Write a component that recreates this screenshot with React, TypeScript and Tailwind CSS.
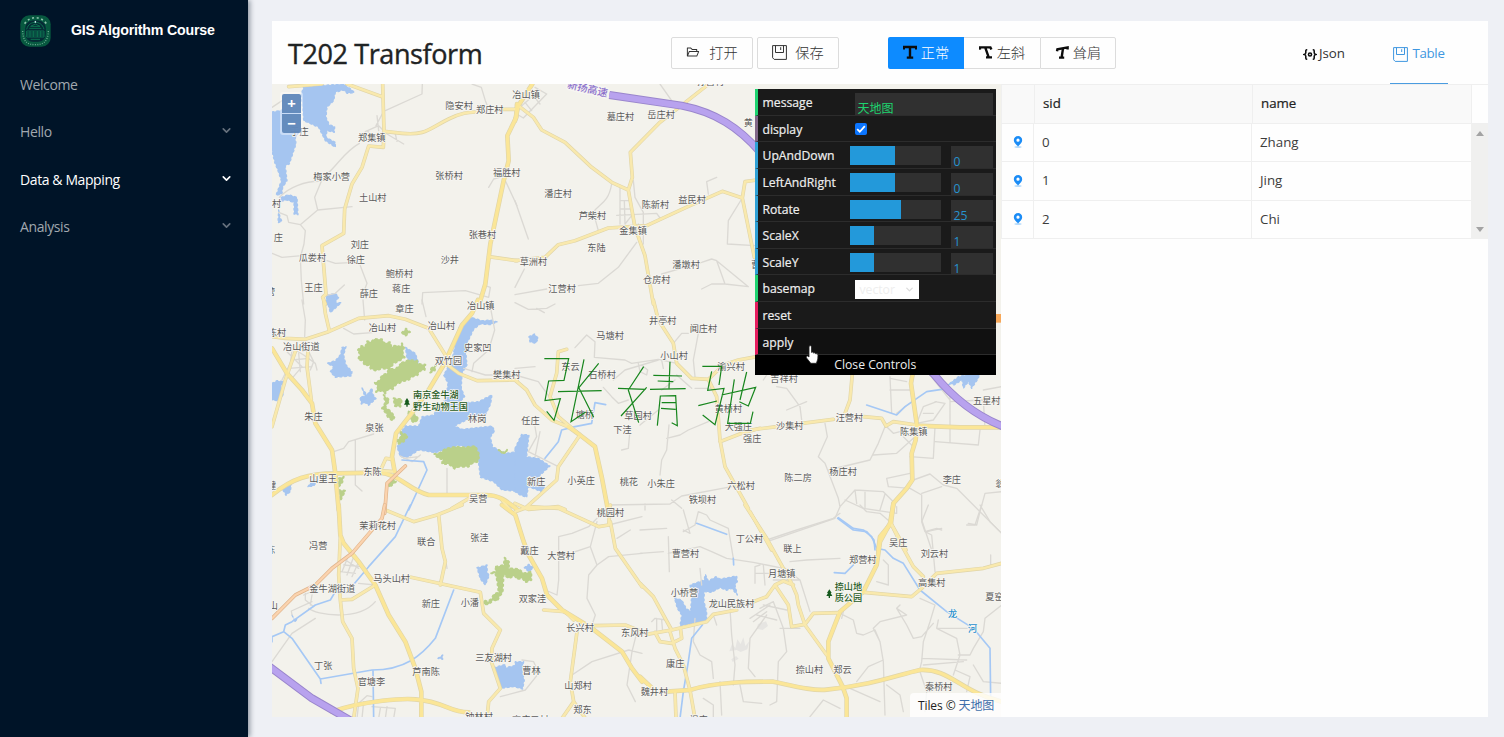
import React from "react";
import { AiOutlineFolderOpen } from "react-icons/ai";
import { FiChevronDown } from "react-icons/fi";

type Label = [number, number, string];

interface Sector {
  x: number;
  y: number;
  water?: string;
  green?: string;
  gray?: string;
  minor?: string;
  major?: string;
  orange?: string;
  river?: string;
  labels: Label[];
}

// Map geometry, in thirds of a pixel, split into sectors with their own origin.
const sectors: Sector[] = [
  {
    x: 0,
    y: 0,
    water:
      "M95 8L215 0L240 18L247 26L225 28L215 18L190 25L185 50L165 70L162 100L172 122L188 128L187 145L165 140L162 160L190 175L190 190L160 170L140 130L95 110L88 30ZM0 84L32 78L85 80L84 140L70 160L72 180L52 240L40 245L45 290L32 310L30 330L12 334L28 290L18 260L8 235L0 200ZM28 340L50 332L75 340L78 392L66 390L66 356L45 348L25 352ZM20 378L24 400L30 412L18 416ZM165 634L190 628L200 640L185 662L160 662Z",
    gray:
      "M340 80L450 30L451 0M600 0L628 10L640 50L645 62M0 70L45 40M312 125L335 82M315 95L320 140M280 143L320 125L345 150L395 180M285 140L330 175M370 150L375 172M262 178C215 205 200 240 165 270L148 292L128 340L137 378L240 368M148 292C100 290 50 310 22 340M137 378L85 422L50 415L45 395L20 385M85 422L100 440L96 480L85 520L88 590L95 660M0 508L30 520L90 515M165 530L190 538L250 535M265 545L285 598L275 625M217 603L190 628L160 635M450 660L452 626L580 620L650 640L655 610L640 605M650 310L665 285L700 275M700 290L735 365",
    minor:
      "M50 8L150 0M225 0L330 38M332 0L336 142L390 148C460 155 470 135 530 105C570 85 590 85 615 84M690 76L735 76M336 142L334 190L290 186L270 250L240 300L218 375L215 448L150 485L162 630L152 640L160 660M650 518L735 530",
    major: "M735 60L733 100L706 155L710 230L695 290L655 480L640 600L625 650",
    labels: [
      [520, 66, "隐安村"], [612, 76, "郑庄村"], [258, 160, "郑集镇"], [55, 143, "于庄"],
      [124, 278, "梅家小营"], [490, 276, "张桥村"], [663, 266, "福胜村"], [261, 340, "土山村"],
      [0, 360, "村"], [5, 462, "庄"], [590, 452, "张巷村"], [236, 483, "刘庄"], [224, 526, "徐庄"],
      [80, 521, "瓜娄村"], [506, 527, "沙井"], [341, 568, "鲍桥村"], [97, 611, "王庄"],
      [360, 615, "蒋庄"], [263, 629, "薛庄"], [-18, 622, "营"],
    ],
  },
  {
    x: 729,
    y: 0,
    gray:
      "M435 0L470 50M5 90L25 102L95 30L60 10M15 70L55 35L75 60M30 55L50 80M290 300C280 360 250 360 235 385L250 440M315 310L315 420M328 350L330 420M355 290L360 340L385 385L385 480M315 350L345 350M315 375L350 375M305 394L425 388L435 402M330 420L350 395M370 420L375 480M365 475L310 550L250 598L190 605M95 615L0 632M440 570L560 535L590 525L605 530L630 600L700 608L605 530M560 615L590 600L630 600M605 280L575 293L580 330M680 345L640 410L637 480L720 485M0 350L40 465M28 555L0 610",
    minor:
      "M10 65L55 100L80 138L150 175L230 250L290 295L340 318L360 430L390 515L415 660M340 318L352 280L346 205L435 115L575 5M0 530L90 520L130 482L180 470L280 432L395 425L525 365L622 322L682 342L690 293L725 288M682 342L718 520",
    major: "M52 0L10 65L0 110",
    labels: [
      [-8, 31, "冶山镇"], [545, -6, "孙营村"], [275, 97, "墓庄村"], [397, 92, "岳庄村"], [686, 116, "黄"],
      [88, 328, "潘庄村"], [191, 396, "芦柴村"], [380, 363, "陈新村"], [490, 348, "益民村"],
      [313, 439, "金集镇"], [217, 491, "东陆"], [14, 532, "草洲村"], [472, 541, "潘墩村"],
      [384, 588, "仓房村"], [100, 613, "江营村"], [708, 541, "曹"],
    ],
  },
  {
    x: 0,
    y: 648,
    water:
      "M560 85L570 70L598 52L630 62L655 60L676 66L655 74L625 72L605 88L590 120L580 140L585 195L570 220L568 265L578 290L560 310L620 305L660 284L656 312L640 345L600 352L548 378L570 388L660 378L668 392L655 412L662 440L700 460L735 455L735 574L690 570L665 545L625 532L615 450L560 436L490 458L440 450L408 472L385 470L375 440L390 425L385 400L400 378L440 378L450 350L485 345L500 315L520 300L528 250L515 225L540 180ZM222 140L215 165L222 195L240 215L238 228L190 232L175 215L185 200L165 190L190 182L205 165L210 142ZM0 250L15 242L36 245L25 262L35 282L20 302L0 300ZM270 264L285 285L300 264L302 282L312 296L290 316L280 308L268 312L264 292L278 288ZM400 142L430 160L440 190L425 192L405 175ZM165 0L190 -10L190 8L208 8L175 38ZM30 565L58 552L55 575L42 586ZM108 560L120 540L138 540L125 558Z",
    green:
      "M258 150L268 138L280 140L285 124L298 126L306 117L330 118L338 130L355 126L358 142L372 136L384 140L390 130L396 142L392 160L398 172L380 184L365 190L352 208L330 205L312 212L296 206L292 195L278 196L272 182L258 178L264 164ZM390 188L410 180L435 182L440 192L460 194L458 210L445 212L436 226L420 230L410 240L392 244L370 255L362 268L348 268L340 280L328 272L312 276L318 260L308 248L322 242L330 226L345 220L350 208L372 206ZM390 98L402 86L414 96L400 108ZM365 295L390 298L385 320L368 318ZM335 285L352 300L340 322L356 334L368 350L362 362L348 352L342 340L330 325L340 308ZM410 335L430 345L440 358L425 368L408 350ZM385 395L408 408L395 425L378 432L375 420L388 410ZM487 462L505 458L520 446L550 440L580 442L610 438L622 465L618 485L600 490L590 500L560 500L548 506L530 492L510 492L512 478L500 475ZM478 205L492 195L488 212L474 218ZM200 535L215 530L210 550L200 560ZM200 570L220 572L205 602ZM350 545L362 535L372 545L352 562ZM680 450L700 460L706 448L695 462Z",
    gray:
      "M450 0L462 50M273 0L278 60M90 0L100 60L98 110M215 85L245 102L300 98M655 20L668 90L650 150L605 190L600 215M735 225L640 225L575 205M60 150L55 190L30 240M45 155L90 200L60 235M70 150L95 165L130 190L135 210M60 180L110 175M50 205L120 200M80 160L85 215M110 155L125 185L115 210M185 455L215 445L230 425L305 402M250 420L250 555L270 573M525 505L525 580M385 468L420 485L445 465M395 475L440 470",
    minor:
      "M0 110L40 115L100 118L170 95L260 55L350 47L400 58L470 85L520 165M155 0L160 40L172 92M75 140L40 240L0 380M108 150L105 200L118 300M368 515L325 512L342 475L360 478M520 190L560 220L615 242L735 240M540 625L600 590M690 600L715 630",
    major:
      "M618 0L600 40L570 75L545 130L515 195L470 270L415 345L372 400L360 470L368 515M0 145L45 220L90 270L120 310L130 370L180 450L190 520L200 630M0 585C60 535 110 520 190 520L320 518C380 520 410 570 470 585L640 585C680 585 700 600 735 628",
    orange: "M400 498L345 550L338 640",
    river: "M390 480L455 485L465 510L410 630",
    labels: [
      [585, 17, "冶山镇"], [370, 25, "章庄"], [-40, 98, "小陈村"], [290, 84, "冶山村"], [467, 76, "冶山村"],
      [33, 140, "冶山街道"], [576, 144, "史家凹"], [488, 182, "双竹园"], [663, 225, "樊集村"],
      [97, 350, "朱庄"], [280, 384, "泉张"], [588, 356, "林岗"], [274, 514, "东陈"],
      [112, 536, "山里王"], [591, 595, "吴营"], [-15, 557, "健"],
    ],
  },
  {
    x: 729,
    y: 648,
    water:
      "M0 445L20 403L42 405L38 440L35 470L70 475L105 498L60 540L88 560L80 575L40 560L35 592L15 585L0 575ZM42 110L58 102L70 115L62 130L45 126Z",
    gray:
      "M0 8L40 28L95 25L120 12M65 25L88 38M180 143L215 105L240 125L238 172L330 180L350 190L430 178L485 190M475 130L500 100L520 100M550 100L535 180L540 230M0 205L60 200M0 225L70 245L110 300M370 190L375 215L395 225L398 210L380 195M295 240L330 210L430 180M265 262L290 290L310 310L340 300M440 180L445 205M480 240L440 270M485 225L530 265M60 380L65 410L40 455L130 500M75 395L60 470M285 210L260 240M345 390L340 445L320 450M375 375L430 330M455 415L495 405L520 390L580 365M462 375L455 450L440 480L435 525M540 265L590 265M280 615L465 612L500 588L650 560M470 600L500 625M390 612L390 630",
    minor:
      "M0 240L35 270L60 315L110 360L170 385M195 405L130 500L125 540L30 625M415 0L430 60L475 130L485 190L530 235L580 238L625 195L670 180L725 170M580 238L605 290L615 420L630 500L700 625M615 425L680 400L735 385M0 610L40 628L130 620L150 628M155 148L130 155L125 220L105 290L130 350L195 405",
    major: "M160 380L195 405L240 440L260 530L278 625",
    river: "M90 475L130 425L140 390L180 380L230 370L240 308L272 314",
    labels: [
      [402, 61, "井亭村"], [244, 108, "马塘村"], [524, 86, "闻庄村"], [436, 168, "小山村"],
      [139, 201, "东云"], [220, 225, "石桥村"], [607, 200, "渝兴村"], [599, 325, "黄桥村"],
      [19, 362, "任庄"], [182, 343, "塘桥"], [328, 348, "草园村"], [295, 390, "下洼"], [629, 379, "大强庄"],
      [684, 417, "强庄"], [36, 544, "新庄"], [157, 543, "小英庄"], [314, 544, "桃花"], [397, 552, "小朱庄"],
      [637, 558, "六松村"], [521, 598, "铁坝村"],
    ],
  },
  {
    x: 1434,
    y: 858,
    water: "M600 40L625 20L690 5L685 25L665 55L655 35L640 55L636 30L612 45Z",
    gray:
      "M40 30L50 15M80 50L110 55L150 110L155 150M110 120L170 95M225 160L232 200L205 260L225 280L265 385L270 410L255 445L60 512M405 170L385 220L360 270L235 300M370 255L440 250L490 205M560 95L520 110L500 160L550 150L585 100L555 95M600 80L600 215M520 130L550 130M555 170L550 265L480 260M555 215L685 225L690 180M600 95L700 90L705 175M420 20L425 130M420 60L480 60M420 25L470 35M440 130L480 100M410 170L430 190L450 185M460 200L490 230M410 325L480 310M410 325L415 350L480 355L515 375L515 450L545 540M530 485L575 475M490 330L540 312L580 345L620 355L690 425L680 465L655 460M690 425L705 370L755 365M690 425L755 490M515 370L575 350M270 410L315 360L400 365L430 395M285 390L340 415L440 430L440 410M315 360L320 400M345 365L345 415M405 372L390 420M700 60L755 50M540 15L600 90",
    minor:
      "M0 180L80 170L250 148M308 0L300 90L285 130M340 140L395 145L408 168L430 155L500 165M423 460L468 540M0 425L65 540",
    major:
      "M490 0L483 40L500 160L497 210L485 250L487 330L470 355L430 400L423 460L390 500L385 540M500 167L630 172L755 172",
    river: "M350 105L440 135L465 110L530 65L575 58L610 35M263 445L310 480L350 485L372 510L375 540",
    labels: [
      [61, 26, "吉祥村"], [669, 92, "五星村"], [78, 168, "沙集村"], [257, 144, "汪营村"], [450, 184, "陈集镇"],
      [238, 305, "杨庄村"], [103, 322, "陈二房"], [578, 330, "李庄"], [736, 340, "翁"],
    ],
  },
  {
    x: 0,
    y: 1263,
    water:
      "M665 488L700 478L700 488L728 482L730 470L755 470L750 500L757 525L752 552L725 545L685 550ZM615 188L645 180L646 205L652 210L640 240L625 222ZM757 188L770 178L785 188L770 200ZM498 460L512 450L512 463ZM60 330L68 345L75 340L70 352Z",
    green:
      "M672 185L695 180L698 158L712 172L710 190L740 192L755 205L778 200L778 225L760 232L752 220L735 222L728 212L710 220L695 208L692 262L684 272L675 288L665 284L650 298L632 298L636 286L648 290L660 280L665 268L680 262L675 225L670 205L655 205L670 200Z",
    gray:
      "M215 180L270 185M220 165L260 190M205 200L250 205M230 150L210 200M245 155L225 210M260 170L240 215M100 265L100 285L125 305M120 270L115 300M95 270L130 255M110 310C130 330 260 350 310 290M0 470L60 385L130 340M60 330L58 318L120 290M260 235L310 240M255 640L260 595L285 572L300 575M275 590L270 640M300 605L370 610L365 640M325 610L320 640M345 605L340 640M520 160L525 190M860 95L860 225L855 270L820 255M860 95L900 85L950 65L975 40M880 150L955 125L975 180L950 210L945 280L970 330L960 360M975 180L1010 155L1110 145M975 50L955 125M1035 100L1075 75M1010 60L1110 35M685 575L760 555L800 505L785 470L750 465M900 510L960 470L1070 435L1110 445M1095 380L1080 440L1065 540L1090 590",
    minor:
      "M340 15L425 50L495 30L570 0M500 30L510 130L520 170L505 240M410 215L625 262L635 325L685 375L660 430L658 470L685 550L650 590L645 640M205 95L200 210L205 285L212 350L240 400L245 490L258 550L245 640M205 285L240 283L310 240M815 315L880 320L905 345M915 380L895 530L905 590L870 640M905 590L940 640M960 362L1060 360L1110 380M730 20L770 5L860 10L980 65L1010 60L1015 0M1015 50L1030 130L1110 245",
    major:
      "M200 0L205 90L215 115L260 170L310 240L350 330L400 410L430 490L448 560L448 640M690 0L730 30L755 110L770 150L810 220L825 270L870 315L960 370L1050 440L1080 490L1110 530M180 620C280 585 400 580 430 583C520 590 530 622 590 622",
    orange: "M338 0L330 40L240 145L180 190L130 240L70 270L0 340",
    river:
      "M415 0L370 95L290 185L225 262L190 260L175 285L130 300L60 350L40 360L35 380L0 395L0 410M35 380L60 400L145 522L300 495C400 495 450 450 490 400L545 255M303 495L305 640M145 522L147 535",
    labels: [
      [262, 63, "茉莉花村"], [111, 121, "冯营"], [435, 109, "联合"], [595, 97, "张洼"], [745, 138, "戴庄"],
      [826, 151, "大营村"], [974, 24, "桃园村"], [304, 222, "马头山村"], [112, 252, "金牛湖街道"],
      [449, 297, "新庄"], [566, 293, "小潘"], [740, 280, "双家洼"], [883, 368, "长兴村"], [1047, 383, "东风村"],
      [126, 482, "丁张"], [421, 501, "芦南陈"], [257, 530, "官塘李"], [610, 459, "三友湖村"], [751, 496, "曹林"],
      [877, 542, "山郑村"], [904, 613, "郑东"], [580, 634, "钟林村"], [-10, 302, "山"], [-18, 134, "陈"],
      [720, 645, "高庄二村"],
    ],
  },
  {
    x: 1104,
    y: 1263,
    water:
      "M103 278L125 285L140 312L152 318L155 270L150 240L192 225L196 208L205 228L228 215L240 222L290 213L292 230L285 240L292 270L275 250L260 256L240 248L215 262L193 260L192 290L200 320L200 348L120 362L125 330L112 310Z",
    gray:
      "M0 75L80 70M130 80L165 60L175 20L200 30L210 45L265 70L280 160M85 95L88 200M85 145L180 125L215 140L260 160L340 172L380 180L430 190M0 145L70 140M380 105L470 75L580 40L600 25M130 15L150 85L130 75M660 0L680 20L720 25L750 50M865 0L845 50L855 80L875 90L885 200M855 80L890 70L905 75M1025 0L1005 60L980 60M1020 0L1050 50L1085 85M360 180L345 185L345 235M370 180L375 240M345 205L390 205M180 190L185 240M450 170L500 165L600 160M435 190L480 225L510 320M480 225L400 225M370 300L440 315M360 310L400 290L430 370L440 440L415 470L410 590L390 600M330 340L390 300M350 330L410 345M340 350L380 320M380 330L330 400L325 490L345 515M270 310L275 390L285 480L280 540M165 340L160 410L180 450L215 470L220 520M240 530L245 630M300 540L310 590L365 595M420 370L480 370M600 325L640 345L650 385L670 390L705 375L720 410L730 470L735 630M720 410L700 370L720 350L800 330L770 310L780 300M770 310L800 360L820 400L845 395L880 355M710 230L745 240L745 180L730 165M840 280L885 300L870 350L850 410L845 470L840 490M895 345L890 370L950 400L960 450L940 510M890 370L1000 370M845 460L980 465M850 480L970 470M730 465L685 485L650 530M955 450L990 450L1000 430L1030 380L1035 340L1085 300M1000 480L1030 530L1085 535M945 495L990 515L980 560M840 500L860 560L855 620M930 540L860 560M740 540L780 570L790 620M510 635L550 585L600 610M605 340L610 320M220 330L230 360M35 350L45 340L80 345M50 340L50 380M65 345L68 380M1052 150L1052 180M630 550L720 590M190 580L220 600L220 640",
    minor:
      "M315 0L380 100L430 190L455 235L470 270L475 300L495 360L560 450M0 235L40 275L70 330L95 375L20 388M95 375L200 350L220 328L290 315M340 290L380 275L405 240L430 228L460 240M405 240L445 300L455 365L495 358L520 325L600 323M670 262L815 275L845 250L890 205L1030 190L1085 175M755 60L790 130L820 185L850 215M45 382L60 410L95 415L125 400L122 375M90 380L105 430L130 480L150 555L165 640M105 560L108 640",
    major:
      "M760 0L750 55L720 110L710 180L670 260L600 320L565 410L565 460L608 545L620 580L620 635M80 560L150 555C230 530 330 530 400 530C470 545 520 558 560 554C700 540 770 510 840 495C930 490 960 560 1085 590M0 515L35 548",
    river:
      "M170 55L260 88M280 160L281 180M595 38L640 70L670 75L695 95L710 130L735 135L760 160L790 175L840 255L920 320L1000 370L1050 430L1052 580M187 360L155 400L145 470L130 560L120 640M583 203L615 205L640 180",
    labels: [
      [287, 102, "丁公村"], [95, 145, "曹营村"], [430, 132, "联上"], [747, 113, "吴庄"], [842, 146, "刘云村"],
      [627, 164, "郑营村"], [384, 207, "月塘镇"], [834, 233, "高集村"], [92, 263, "小桥营"],
      [206, 296, "龙山民族村"], [1036, 276, "夏窑"], [78, 477, "康庄"], [467, 493, "捺山村"], [580, 493, "郑云"],
      [2, 560, "魏井村"], [855, 545, "秦桥村"], [148, 645, "祝庄"],
    ],
  },
];

const highway =
  "M1012 33L1229 65C1330 85 1400 130 1465 205C1620 400 1800 700 1985 870C2050 950 2120 1000 2200 1030M-10 1746L120 1843L240 1912";

const at = (s: Sector) => `translate(${s.x} ${s.y})`;

function Tree({ x, y }: { x: number; y: number }) {
  return (
    <path
      transform={`translate(${x} ${y})`}
      fill="#14591c"
      d="M0-13L7-2H4L9 7H2V13H-2V7H-9L-4-2H-7Z"
    />
  );
}

function MapCanvas() {
  return (
    <svg
      className="block h-full w-full"
      viewBox="0 0 2187 1899"
      preserveAspectRatio="none"
      strokeLinecap="round"
      strokeLinejoin="round"
      fill="none"
    >
      <rect width="2187" height="1899" fill="#f3f2ec" />
      {sectors.map((s, i) => (
        <g key={i} transform={at(s)}>
          <path d={s.water} fill="#a5c5f0" stroke="#a5c5f0" strokeWidth="4" strokeDasharray="5 9" />
          <path d={s.green} fill="#bad08a" stroke="#bad08a" strokeWidth="6" strokeDasharray="4 11" />
        </g>
      ))}
      <path
        d="M1372 1702l8-22 10 12 6-26 10 14 8-20 6 26 12-14-6 24-20 8-12-6zM1378 1726l14-10 8 8-18 10zM1458 1620l24-8 6 14-16 12-18-4z"
        fill="#e6e5e2"
      />
      {sectors.map((s, i) => (
        <path key={i} transform={at(s)} d={s.gray} stroke="#dbd9d4" strokeWidth="4" />
      ))}
      {sectors.map((s, i) => (
        <path key={i} transform={at(s)} d={s.river} stroke="#a5c8f5" strokeWidth="5" />
      ))}
      {sectors.map((s, i) => (
        <g key={i} transform={at(s)} stroke="#e0d5a8">
          <path d={s.minor} strokeWidth="11" />
          <path d={s.major} strokeWidth="14" />
        </g>
      ))}
      {sectors.map((s, i) => (
        <g key={i} transform={at(s)}>
          <path d={s.minor} strokeWidth="7.5" stroke="#f9e9ad" />
          <path d={s.major} strokeWidth="10" stroke="#fbe697" />
        </g>
      ))}
      {sectors.map((s, i) => (
        <g key={i} transform={at(s)}>
          <path d={s.orange} stroke="#dfb48c" strokeWidth="11" />
          <path d={s.orange} stroke="#fbd3ae" strokeWidth="7" />
        </g>
      ))}
      <path d="M2172 690h15v26h-15z" fill="#f7a85a" />
      <path d={highway} stroke="#9a86cc" strokeWidth="24" strokeLinecap="butt" />
      <path d={highway} stroke="#b8a2ee" strokeWidth="18" strokeLinecap="butt" />
      <g
        fontFamily="'Noto Sans CJK SC', sans-serif"
        fontSize="27.5"
        fill="#5c5c5c"
        stroke="#f7f6f2"
        strokeWidth="5"
        paintOrder="stroke"
      >
        {sectors.map((s, i) => (
          <g key={i} transform={at(s)}>
            {s.labels.map(([x, y, t], j) => (
              <text key={j} x={x} y={y + 10}>
                {t}
              </text>
            ))}
          </g>
        ))}
        <g fill="#275c24" fontWeight="500">
          <text x="423" y="943">南京金牛湖</text>
          <text x="423" y="979">野生动物王国</text>
          <text x="1688" y="1517">捺山地</text>
          <text x="1688" y="1551">质公园</text>
        </g>
        <g fill="#1f8fce" fontWeight="500">
          <text x="2028" y="1598">龙</text>
          <text x="2088" y="1645">河</text>
        </g>
        <text
          transform="translate(884 11) rotate(13)"
          fontSize="31"
          fontWeight="500"
          fill="#8d72cc"
          strokeWidth="9"
        >
          新扬高速
        </text>
      </g>
      <Tree x={405} y={955} />
      <Tree x={1672} y={1529} />
      <g
        transform="translate(729 648)"
        stroke="#17861d"
        strokeWidth="3.6"
        strokeLinecap="butt"
        strokeLinejoin="miter"
      >
        <path d="M88 176L161 176L147 241L101 243L90 302L136 296L117 361L95 334M207 178L168 365L212 336M251 190L190 265M129 275L260 272M190 260L236 352" />
        <path d="M386 200L340 270L371 368M309 265L392 268M395 262L318 348M415 226L501 228M428 243L475 245M465 185L462 265M405 268L512 266M427 377L436 288L482 287L487 377L470 368M440 308L482 308M438 325L482 328" />
        <path d="M562 199L620 199L612 255M590 214L578 271L627 265L600 374L563 345M550 317L606 303M658 238L638 370L706 370L714 335M695 216L675 300M620 285L722 262L700 318L673 305" />
      </g>
    </svg>
  );
}

function Logo() {
  return (
    <svg className="h-8 w-[31px]" viewBox="0 0 93 96" fill="none">
      <rect x="1" y="1" width="91" height="94" rx="27" fill="#07583f" />
      <rect x="14" y="15" width="65" height="67" rx="25" fill="#052b35" stroke="#0c6a4a" strokeWidth="2" />
      <path
        d="M20 43C24 27 36 22 46 22S68 27 72 43M28 40H64M32 34L46 27L60 34ZM20 48H72V66H20ZM20 54H72M20 60H72M30 48V66M40 48V66M52 48V66M62 48V66M32 73H60"
        stroke="#0d7150"
        strokeWidth="3"
      />
      <path d="M14 26C30 2 62 2 79 26" stroke="#8fc3ad" strokeWidth="5" strokeDasharray="6 8" />
      <path d="M8 48C9 82 24 89 46 89S84 82 85 48" stroke="#69a990" strokeWidth="4" strokeDasharray="3 4" />
      <path d="M43 21L46 17L49 21L46 24Z" fill="#dff" />
    </svg>
  );
}

function SaveIcon() {
  return (
    <svg className="h-[15px] w-[15px] shrink-0" viewBox="0 0 15 15" fill="none" stroke="currentColor">
      <path d="M.6.6H14.4V14.4H2.2L.6 12.8ZM3.5.6V7.5H11.5V.6M8.7 2.2V5" />
    </svg>
  );
}

function JsonIcon() {
  return (
    <svg className="h-[11px] w-[14px] shrink-0" viewBox="0 0 14 12" fill="none" stroke="#111" strokeWidth="1.7">
      <path d="M4 .9H3.4Q2.4.9 2.4 2.2V4.2Q2.4 5.5.8 6Q2.4 6.5 2.4 7.8V9.8Q2.4 11.1 3.4 11.1H4M10 .9H10.6Q11.6.9 11.6 2.2V4.2Q11.6 5.5 13.2 6Q11.6 6.5 11.6 7.8V9.8Q11.6 11.1 10.6 11.1H10" />
      <circle cx="7" cy="6" r="1.7" />
    </svg>
  );
}

function SlabT({ d }: { d: string }) {
  return (
    <svg className="h-[14px] w-[14px] shrink-0" viewBox="0 0 14 14" fill="none" stroke="#0c0c0c" strokeWidth="2.4">
      <path d={d} />
    </svg>
  );
}

function Pin() {
  return (
    <svg className="h-3 w-[10px]" viewBox="0 0 10 12">
      <ellipse cx="5" cy="11" rx="3.6" ry="1" fill="#b9dcfa" />
      <path
        fillRule="evenodd"
        fill="#1b8cf6"
        d="M5 0A4.2 4.2 0 0 1 9.2 4.2C9.2 6.6 6.8 8.5 5 10.4C3.2 8.5.8 6.6.8 4.2A4.2 4.2 0 0 1 5 0ZM5 2.6A1.6 1.6 0 1 0 5 5.8A1.6 1.6 0 0 0 5 2.6Z"
      />
    </svg>
  );
}

const menu = [
  { label: "Welcome", sub: false, active: false },
  { label: "Hello", sub: true, active: false },
  { label: "Data & Mapping", sub: true, active: true },
  { label: "Analysis", sub: true, active: false },
];

function Sidebar() {
  return (
    <aside className="z-10 flex h-full w-[248px] shrink-0 flex-col bg-[#001428] shadow-[2px_0_5px_rgba(0,21,41,0.4)]">
      <div className="flex h-[61px] items-center pl-5">
        <Logo />
        <h1 className="mt-px ml-5 font-['Liberation_Sans',sans-serif] text-[14.2px] font-bold tracking-[-0.2px] text-white">
          GIS Algorithm Course
        </h1>
      </div>
      <nav className="flex flex-col">
        {menu.map((m) => (
          <div
            key={m.label}
            className={`flex h-[47.3px] items-center justify-between pr-[15px] pl-5 text-[14px] tracking-[-0.4px] ${
              m.active ? "text-white" : "text-[#a1a8af]"
            }`}
          >
            <span>{m.label}</span>
            {m.sub && (
              <FiChevronDown
                className={`mb-[2px] h-[13px] w-[13px] ${m.active ? "text-white" : "text-[#66717d]"}`}
                strokeWidth={3}
              />
            )}
          </div>
        ))}
      </nav>
    </aside>
  );
}

const cjk = "font-['Noto_Sans_CJK_SC',sans-serif] font-light";

function Header() {
  return (
    <header className="flex h-[63px] shrink-0 bg-[#fefefe] pl-4">
      <h2 className="mt-[11px] w-[383px] text-[27px] leading-[44px] tracking-[-0.4px] text-[#1f2324] [-webkit-text-stroke:0.4px_#1f2324]">
        T202 Transform
      </h2>
      <div className={`mt-4 flex h-[31.5px] text-[14.2px] text-[#333] ${cjk}`}>
        <button className="flex w-[82px] items-center justify-center gap-[9px] rounded-[2px] border border-[#dcdcdc] pb-px">
          <AiOutlineFolderOpen className="h-[14px] w-[14px]" />
          打开
        </button>
        <button className="ml-1 flex w-[82px] items-center justify-center gap-2 rounded-[2px] border border-[#dcdcdc] pb-px">
          <SaveIcon />
          保存
        </button>
        <div className="ml-[49px] flex">
          <button className="flex w-[76px] items-center justify-center gap-1 rounded-l-[2px] bg-[#0d8bff] pb-px text-white">
            <SlabT d="M.8 4.6V2H13.2V4.6M7 2V12.8M3.8 12.6H10.2" />
            正常
          </button>
          <button className="flex w-[76px] items-center justify-center gap-1 border-y border-[#dcdcdc] pb-px">
            <SlabT d="M1 4.6L.8 2.4H11.4L12.4 4.6M6.2 2.4L9.8 12.6M7 12.4H13" />
            左斜
          </button>
          <button className="flex w-[76px] items-center justify-center gap-1 rounded-r-[2px] border border-[#dcdcdc] pb-px">
            <SlabT d="M2 6.2L2.4 4.2L12.6 2.4V4.4M8 3.4L6.6 12.8M4 12.6H9.2" />
            耸肩
          </button>
        </div>
      </div>
      <div className="ml-auto flex pr-10 text-[13.3px]">
        <button className="mr-[45px] flex items-center gap-[2px] pt-[3px] text-[#333]">
          <JsonIcon />
          Json
        </button>
        <button className="flex w-[58px] items-center justify-center gap-1 border-b border-[#4a9ce0] pt-1 tracking-[-0.3px] text-[#3f97e0]">
          <SaveIcon />
          Table
        </button>
      </div>
    </header>
  );
}

const sliders: [string, string, string][] = [
  ["UpAndDown", "w-[45px]", "0"],
  ["LeftAndRight", "w-[45px]", "0"],
  ["Rotate", "w-[51px]", "25"],
  ["ScaleX", "w-6", "1"],
  ["ScaleY", "w-6", "1"],
];

function Row({ label, edge, dark, children }: { label: string; edge: string; dark?: boolean; children?: React.ReactNode }) {
  return (
    <div
      className={`flex h-[26.65px] overflow-hidden border-b border-l-[3px] border-b-[#2c2c2c] ${edge} ${
        dark ? "bg-[#111]" : "bg-[#1a1a1a]"
      }`}
    >
      <span className="w-[92px] shrink-0 pl-[5px] leading-[27px] [-webkit-text-stroke:0.2px_#eee]">{label}</span>
      {children}
    </div>
  );
}

function ControlPanel() {
  return (
    <div className="absolute top-[5px] right-[5px] w-[241.5px] bg-black text-[12.2px] text-[#eee]">
      <Row label="message" edge="border-l-[#1ed36f]">
        <div className="mt-1 ml-[5px] w-[138px] bg-[#303030] pt-[6px] pl-[3px] font-['Noto_Sans_CJK_SC',sans-serif] text-[12px] leading-[18px] text-[#1ed36f]">
          天地图
        </div>
      </Row>
      <Row label="display" edge="border-l-[#806787]">
        <span className="mt-[7px] ml-[5px] flex h-3 w-3 items-center justify-center rounded-[2px] bg-[#0b75ff]">
          <svg className="h-[10px] w-[10px]" viewBox="0 0 10 10" fill="none" stroke="#fff" strokeWidth="1.8">
            <path d="M1.2 5.2L3.8 7.8L8.8 2.2" />
          </svg>
        </span>
      </Row>
      {sliders.map(([label, width, value]) => (
        <Row key={label} label={label} edge="border-l-[#2fa1d6]">
          <div className="mt-1 h-[19px] w-[91px] bg-[#303030]">
            <div className={`h-full bg-[#2399da] ${width}`} />
          </div>
          <div className="mt-1 ml-[10px] w-[42px] bg-[#303030] pt-[7px] pl-[3px] leading-[18px] text-[#2793cf]">
            {value}
          </div>
        </Row>
      ))}
      <Row label="basemap" edge="border-l-[#1ed36f]">
        <div className="mt-[5px] ml-[5px] flex h-[19px] w-16 items-center justify-between bg-white pr-1 pl-[5px] text-[#eee]">
          vector
          <FiChevronDown className="h-[11px] w-[11px] text-[#ddd]" strokeWidth={3} />
        </div>
      </Row>
      <Row label="reset" edge="border-l-[#e61d5f]" />
      <Row label="apply" edge="border-l-[#e61d5f]" dark />
      <div className="h-[19.5px] text-center leading-[19px]">Close Controls</div>
      <svg
        className="absolute top-[255px] left-[50px] h-[21px] w-[15px]"
        viewBox="0 0 15 21"
        fill="#fff"
        stroke="#222"
        strokeWidth=".8"
      >
        <path d="M4 13V3Q4 1.5 5.2 1.5T6.5 3V8.4Q7.7 7.6 8.6 9Q9.8 8.2 10.7 9.8Q12.5 9 13 11L12.8 15L11.4 19.3H5.8L1.4 13.8Q1 11.8 2.7 12Z" />
      </svg>
    </div>
  );
}

function MapPane() {
  return (
    <div className="relative w-[729px] shrink-0 overflow-hidden">
      <MapCanvas />
      <div className="absolute top-2 left-2 flex flex-col gap-px rounded-[3px] bg-white/40 p-[2px] text-white">
        <button className="flex h-[19px] w-[19px] items-center justify-center rounded-t-[2px] bg-[#5f87b9]/95 text-[15px] leading-none font-bold">
          +
        </button>
        <button className="flex h-[19px] w-[19px] items-center justify-center rounded-b-[2px] bg-[#5f87b9]/95 text-[15px] leading-none font-bold">
          −
        </button>
      </div>
      <ControlPanel />
      <div className="absolute right-0 bottom-0 h-6 w-[91px] rounded-tl-[4px] bg-white/80 pl-2 text-[12px] leading-[24px] tracking-[-0.1px] whitespace-nowrap text-[#222]">
        Tiles ©{" "}
        <span className="font-['Noto_Sans_CJK_SC',sans-serif] text-[#3f6fab]">天地图</span>
      </div>
    </div>
  );
}

const people = ["Zhang", "Jing", "Chi"];

function DataTable() {
  return (
    <div className="flex min-w-0 flex-1 flex-col bg-[#fefefe] text-[13.3px] text-[#3c3c3c]">
      <div className="flex h-[39.5px] shrink-0 border-t border-b border-[#efefef]">
        <div className="grid w-[470px] grid-cols-[33px_218px_219px] border-l border-[#f0f0f0] bg-[#f9f9f9] text-[#222] [-webkit-text-stroke:0.2px_#222]">
          <div className="border-r border-[#efefef]" />
          <div className="flex items-center border-r border-[#efefef] pl-2">sid</div>
          <div className="flex items-center border-r border-[#efefef] pl-2">name</div>
        </div>
      </div>
      <div className="flex">
        <div className="w-[470px] border-l border-[#f0f0f0]">
          {people.map((p, i) => (
            <div key={p} className="grid h-[38.5px] grid-cols-[32px_218px_218px] border-b border-[#efefef]">
              <div className="flex items-center justify-center border-r border-[#efefef]">
                <Pin />
              </div>
              <div className="flex items-center border-r border-[#efefef] pt-px pl-2">{i}</div>
              <div className="flex items-center pt-px pl-2">{p}</div>
            </div>
          ))}
        </div>
        <div className="flex flex-1 flex-col items-center justify-between bg-[#f0f0ef] py-[7px]">
          <svg className="h-[5px] w-2" viewBox="0 0 8 5" fill="#a3a3a3">
            <path d="M0 5L4 0L8 5Z" />
          </svg>
          <svg className="h-[5px] w-2" viewBox="0 0 8 5" fill="#a3a3a3">
            <path d="M0 0L4 5L8 0Z" />
          </svg>
        </div>
      </div>
    </div>
  );
}

export default function App() {
  return (
    <div className="flex h-screen w-screen overflow-hidden bg-[#eef0f5] font-['Open_Sans','Noto_Sans_CJK_SC',sans-serif]">
      <Sidebar />
      <main className="flex min-w-0 flex-1 flex-col pt-[21px] pr-4 pb-5 pl-6">
        <Header />
        <div className="flex min-h-0 flex-1">
          <MapPane />
          <DataTable />
        </div>
      </main>
    </div>
  );
}
